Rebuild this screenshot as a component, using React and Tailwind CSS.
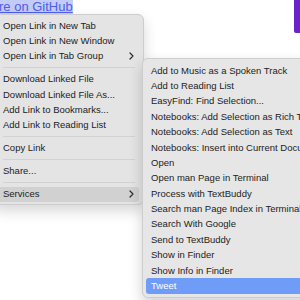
import React from "react";

const mainItems = [
  { label: "Open Link in New Tab" },
  { label: "Open Link in New Window" },
  { label: "Open Link in Tab Group", more: true },
  "sep",
  { label: "Download Linked File" },
  { label: "Download Linked File As..." },
  { label: "Add Link to Bookmarks..." },
  { label: "Add Link to Reading List" },
  "sep",
  { label: "Copy Link" },
  "sep",
  { label: "Share..." },
  "sep",
  { label: "Services", more: true, hover: true },
];

const services = [
  "Add to Music as a Spoken Track",
  "Add to Reading List",
  "EasyFind: Find Selection...",
  "Notebooks: Add Selection as Rich Text",
  "Notebooks: Add Selection as Text",
  "Notebooks: Insert into Current Document",
  "Open",
  "Open man Page in Terminal",
  "Process with TextBuddy",
  "Search man Page Index in Terminal",
  "Search With Google",
  "Send to TextBuddy",
  "Show in Finder",
  "Show Info in Finder",
  "Tweet",
];

function Chevron() {
  return (
    <svg width="5" height="8" viewBox="0 0 5 8" className="shrink-0">
      <polyline points="1,1 4,4 1,7" fill="none" stroke="#2a2a2a" strokeWidth="1.2" strokeLinecap="round" strokeLinejoin="round" />
    </svg>
  );
}

export default function App() {
  return (
    <div className="relative h-[300px] w-[300px] overflow-hidden bg-white font-['Liberation_Sans',Arial,sans-serif]">
      {/* selected link text behind the menu */}
      <div className="absolute left-[-1px] top-[-1.5px] bg-[#c2ccf6] text-[13px] leading-[15px] text-[#4f5fe6] underline">
        re on GitHub
      </div>

      {/* purple strip at the right edge */}
      <div className="absolute right-0 top-0 h-[33px] w-[6px] rounded-bl-[2px] bg-[#6b22cc]" />

      {/* context menu */}
      <div className="absolute left-[-7px] top-[14px] w-[151px] rounded-[6px] border border-[#cdcdcd] bg-[#e4e4e4] pb-[2px] pt-[3px] text-[9.5px] text-[#222] shadow-[0_6px_14px_rgba(0,0,0,0.16)]">
        {mainItems.map((it, i) =>
          it === "sep" ? (
            <div key={i} className="flex h-[7.5px] items-center pl-[9px] pr-[8px]">
              <div className="h-px w-full bg-[#d2d2d2]" />
            </div>
          ) : (
            <div
              key={i}
              className={`mx-[4px] flex h-[15.4px] items-center justify-between rounded-[3px] pl-[5px] pr-[5px] ${
                it.hover ? "bg-[#d1d1d1]" : ""
              }`}
            >
              <span className="whitespace-nowrap">{it.label}</span>
              {it.more && <Chevron />}
            </div>
          )
        )}
      </div>

      {/* services submenu */}
      <div className="absolute left-[142px] top-[58px] w-[200px] rounded-[6px] border border-[#cdcdcd] bg-[#e6e6e6] pb-[3px] pt-[4px] text-[9.5px] text-[#222] shadow-[0_6px_14px_rgba(0,0,0,0.18)]">
        {services.map((s) => (
          <div
            key={s}
            className={`mx-[3px] flex h-[15.4px] items-center rounded-[3px] px-[5px] ${
              s === "Tweet" ? "bg-[#6e9cf7] text-white" : ""
            }`}
          >
            <span className="whitespace-nowrap">{s}</span>
          </div>
        ))}
      </div>
    </div>
  );
}
